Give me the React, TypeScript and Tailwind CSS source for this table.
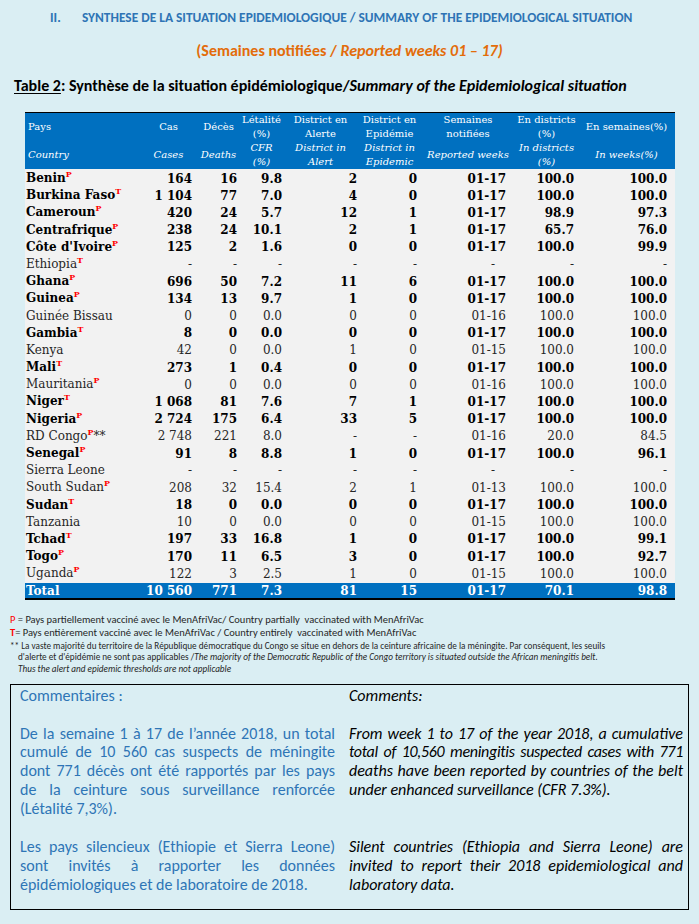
import React from "react";

type Row = {
  name: string;
  sup: string;
  extra?: string;
  bold: boolean;
  v: string[];
};

const rows: Row[] = [
  { name: "Benin", sup: "P", bold: true, v: ["164", "16", "9.8", "2", "0", "01-17", "100.0", "100.0"] },
  { name: "Burkina Faso", sup: "T", bold: true, v: ["1 104", "77", "7.0", "4", "0", "01-17", "100.0", "100.0"] },
  { name: "Cameroun", sup: "P", bold: true, v: ["420", "24", "5.7", "12", "1", "01-17", "98.9", "97.3"] },
  { name: "Centrafrique", sup: "P", bold: true, v: ["238", "24", "10.1", "2", "1", "01-17", "65.7", "76.0"] },
  { name: "Côte d'Ivoire", sup: "P", bold: true, v: ["125", "2", "1.6", "0", "0", "01-17", "100.0", "99.9"] },
  { name: "Ethiopia", sup: "T", bold: false, v: ["-", "-", "-", "-", "-", "-", "-", "-"] },
  { name: "Ghana", sup: "P", bold: true, v: ["696", "50", "7.2", "11", "6", "01-17", "100.0", "100.0"] },
  { name: "Guinea", sup: "P", bold: true, v: ["134", "13", "9.7", "1", "0", "01-17", "100.0", "100.0"] },
  { name: "Guinée Bissau", sup: "", bold: false, v: ["0", "0", "0.0", "0", "0", "01-16", "100.0", "100.0"] },
  { name: "Gambia", sup: "T", bold: true, v: ["8", "0", "0.0", "0", "0", "01-17", "100.0", "100.0"] },
  { name: "Kenya", sup: "", bold: false, v: ["42", "0", "0.0", "1", "0", "01-15", "100.0", "100.0"] },
  { name: "Mali", sup: "T", bold: true, v: ["273", "1", "0.4", "0", "0", "01-17", "100.0", "100.0"] },
  { name: "Mauritania", sup: "P", bold: false, v: ["0", "0", "0.0", "0", "0", "01-16", "100.0", "100.0"] },
  { name: "Niger", sup: "T", bold: true, v: ["1 068", "81", "7.6", "7", "1", "01-17", "100.0", "100.0"] },
  { name: "Nigeria", sup: "P", bold: true, v: ["2 724", "175", "6.4", "33", "5", "01-17", "100.0", "100.0"] },
  { name: "RD Congo", sup: "P", extra: "**", bold: false, v: ["2 748", "221", "8.0", "-", "-", "01-16", "20.0", "84.5"] },
  { name: "Senegal", sup: "P", bold: true, v: ["91", "8", "8.8", "1", "0", "01-17", "100.0", "96.1"] },
  { name: "Sierra Leone", sup: "", bold: false, v: ["-", "-", "-", "-", "-", "-", "-", "-"] },
  { name: "South Sudan", sup: "P", bold: false, v: ["208", "32", "15.4", "2", "1", "01-13", "100.0", "100.0"] },
  { name: "Sudan", sup: "T", bold: true, v: ["18", "0", "0.0", "0", "0", "01-17", "100.0", "100.0"] },
  { name: "Tanzania", sup: "", bold: false, v: ["10", "0", "0.0", "0", "0", "01-15", "100.0", "100.0"] },
  { name: "Tchad", sup: "T", bold: true, v: ["197", "33", "16.8", "1", "0", "01-17", "100.0", "99.1"] },
  { name: "Togo", sup: "P", bold: true, v: ["170", "11", "6.5", "3", "0", "01-17", "100.0", "92.7"] },
  { name: "Uganda", sup: "P", bold: false, v: ["122", "3", "2.5", "1", "0", "01-15", "100.0", "100.0"] },
];

const total = ["10 560", "771", "7.3", "81", "15", "01-17", "70.1", "98.8"];

const pads = [
  "pr-[5px]",
  "pr-[3px]",
  "pr-[1px]",
  "pr-[1px]",
  "pr-[4px]",
  "pr-[9px]",
  "pr-[4px]",
  "pr-[8px]",
];

const grid =
  "grid grid-cols-[115px_57px_43px_43px_75px_63px_94px_63px_97px]";

const serif = "[font-family:'DejaVu_Serif','Liberation_Serif',serif]";
const sans = "[font-family:'Carlito','Lato',sans-serif]";

function HeadCell({
  top,
  bottom,
  left,
}: {
  top: React.ReactNode;
  bottom: React.ReactNode;
  left?: boolean;
}) {
  return (
    <div className="flex flex-col">
      <div
        className={
          "flex h-[28px] flex-col justify-center " +
          (left ? "items-start pl-[3px] text-left" : "items-center text-center")
        }
      >
        {top}
      </div>
      <div
        className={
          "flex h-[28px] flex-col justify-center italic " +
          (left ? "items-start pl-[3px] text-left" : "items-center text-center")
        }
      >
        {bottom}
      </div>
    </div>
  );
}

function Sup({ s }: { s: string }) {
  if (!s) return null;
  return (
    <span className="relative -top-[5px] text-[8px] font-bold text-[#ff0000]">
      {s}
    </span>
  );
}

function Line({ text, last, tight }: { text: string; last?: boolean; tight?: boolean }) {
  return (
    <div
      className={
        "whitespace-nowrap " +
        (tight ? "tracking-[-0.3px] " : "") +
        (last ? "text-left" : "text-justify [text-align-last:justify]")
      }
    >
      {text}
    </div>
  );
}

export default function App() {
  return (
    <div className={"min-h-[924px] w-[699px] bg-[#daeef3] " + sans}>
      {/* Title */}
      <div className="flex pt-[10px] text-[13.4px] font-bold leading-[16px] text-[#2e74b5]">
        <span className="ml-[50px] w-[32px]">II.</span>
        <span>SYNTHESE DE LA SITUATION EPIDEMIOLOGIQUE / SUMMARY OF THE EPIDEMIOLOGICAL SITUATION</span>
      </div>

      <div className="mt-[15px] text-center text-[16px] font-bold leading-[19px] text-[#e36c0a]">
        (Semaines notifiées / <span className="italic">Reported weeks 01 – 17)</span>
      </div>

      <div className="ml-[14px] mt-[16px] text-[16px] font-bold leading-[19px] text-black">
        <span className="underline underline-offset-2">Table 2</span>: Synthèse de la situation
        épidémiologique/<span className="italic">Summary of the Epidemiological situation</span>
      </div>

      {/* Table */}
      <div className={"ml-[25px] mt-[17px] w-[650px] " + serif}>
        <div
          className={
            grid +
            " border-t border-black bg-[#0070c0] text-[10px] leading-[14px] text-white"
          }
        >
          <HeadCell left top="Pays" bottom="Country" />
          <HeadCell top="Cas" bottom="Cases" />
          <HeadCell top="Décès" bottom="Deaths" />
          <HeadCell
            top={
              <>
                <span>Létalité</span>
                <span>(%)</span>
              </>
            }
            bottom={
              <>
                <span>CFR</span>
                <span>(%)</span>
              </>
            }
          />
          <HeadCell
            top={
              <>
                <span>District en</span>
                <span>Alerte</span>
              </>
            }
            bottom={
              <>
                <span>District in</span>
                <span>Alert</span>
              </>
            }
          />
          <HeadCell
            top={
              <>
                <span>District en</span>
                <span>Epidémie</span>
              </>
            }
            bottom={
              <>
                <span>District in</span>
                <span>Epidemic</span>
              </>
            }
          />
          <HeadCell
            top={
              <>
                <span>Semaines</span>
                <span>notifiées</span>
              </>
            }
            bottom="Reported weeks"
          />
          <HeadCell
            top={
              <>
                <span>En districts</span>
                <span>(%)</span>
              </>
            }
            bottom={
              <>
                <span>In districts</span>
                <span>(%)</span>
              </>
            }
          />
          <HeadCell top="En semaines(%)" bottom="In weeks(%)" />
        </div>

        <div className="bg-[#f2f2f2] pt-[1px]">
          {rows.map((r) => (
            <div
              key={r.name}
              className={
                grid +
                " h-[17.2px] items-center text-[12px] leading-[17px] " +
                (r.bold ? "font-bold text-black" : "text-[#262626]")
              }
            >
              <div className="whitespace-nowrap pl-[1px]">
                {r.name}
                <Sup s={r.sup} />
                {r.extra ? <span className="font-normal">{r.extra}</span> : null}
              </div>
              {r.v.map((val, i) => (
                <div
                  key={i}
                  className={
                    "text-right " +
                    (i === 5 && val === "-" ? "pr-[20px]" : pads[i])
                  }
                >
                  {val}
                </div>
              ))}
            </div>
          ))}
        </div>

        <div
          className={
            grid +
            " h-[17px] items-center border-b-2 border-black bg-[#0070c0] text-[12px] font-bold leading-[17px] text-white"
          }
        >
          <div className="pl-[1px]">Total</div>
          {total.map((val, i) => (
            <div key={i} className={"text-right " + pads[i]}>
              {val}
            </div>
          ))}
        </div>
      </div>

      {/* Footnotes */}
      <div className="ml-[10px] mt-[14px] text-[#262626]">
        <div className="text-[10.5px] leading-[12px]">
          <span className="text-[#ff0000]">P</span> = Pays partiellement vacciné avec le MenAfriVac/ Country
          partially&nbsp; vaccinated with MenAfriVac
        </div>
        <div className="text-[10.5px] leading-[13px]">
          <span className="font-bold text-[#ff0000]">T</span>= Pays entièrement vacciné avec le MenAfriVac /
          Country entirely&nbsp; vaccinated with MenAfriVac
        </div>
        <div className="mt-[1px] text-[9.2px] leading-[11.5px]">
          <div>
            ** La vaste majorité du territoire de la République démocratique du Congo se situe en dehors de la
            ceinture africaine de la méningite. Par conséquent, les seuils
          </div>
          <div className="pl-[8px]">
            d'alerte et d'épidémie ne sont pas applicables /
            <span className="italic">
              The majority of the Democratic Republic of the Congo territory is situated outside the African
              meningitis belt.
            </span>
          </div>
          <div className="pl-[8px] italic">Thus the alert and epidemic thresholds are not applicable</div>
        </div>
      </div>

      {/* Comments box */}
      <div className="mx-[10px] mt-[10px] border border-black bg-[#daeef3] px-[9px] pb-[15px] pt-[2px] text-[16px] leading-[18.7px]">
        <div className="grid grid-cols-[315px_334px] gap-x-[14px]">
          <div className="text-[#2e75b6]">Commentaires :</div>
          <div className="italic text-black">Comments:</div>

          <div className="mt-[19px] text-[#2e75b6]">
            <Line text="De la semaine 1 à 17 de l’année 2018, un total" />
            <Line text="cumulé de 10 560 cas suspects de méningite" />
            <Line text="dont 771 décès ont été rapportés par les pays" />
            <Line text="de la ceinture sous surveillance renforcée" />
            <Line text="(Létalité 7,3%)." last />
          </div>
          <div className="mt-[19px] italic text-black">
            <Line text="From week 1 to 17 of the year 2018, a cumulative" />
            <Line text="total of 10,560 meningitis suspected cases with 771" tight />
            <Line text="deaths have been reported by countries of the belt" />
            <Line text="under enhanced surveillance (CFR 7.3%)." last />
          </div>

          <div className="mt-[20px] text-[#2e75b6]">
            <Line text="Les pays silencieux (Ethiopie et Sierra Leone)" />
            <Line text="sont invités à rapporter les données" />
            <Line text="épidémiologiques et de laboratoire de 2018." last />
          </div>
          <div className="mt-[20px] italic text-black">
            <Line text="Silent countries (Ethiopia and Sierra Leone) are" />
            <Line text="invited to report their 2018 epidemiological and" />
            <Line text="laboratory data." last />
          </div>
        </div>
      </div>
    </div>
  );
}
